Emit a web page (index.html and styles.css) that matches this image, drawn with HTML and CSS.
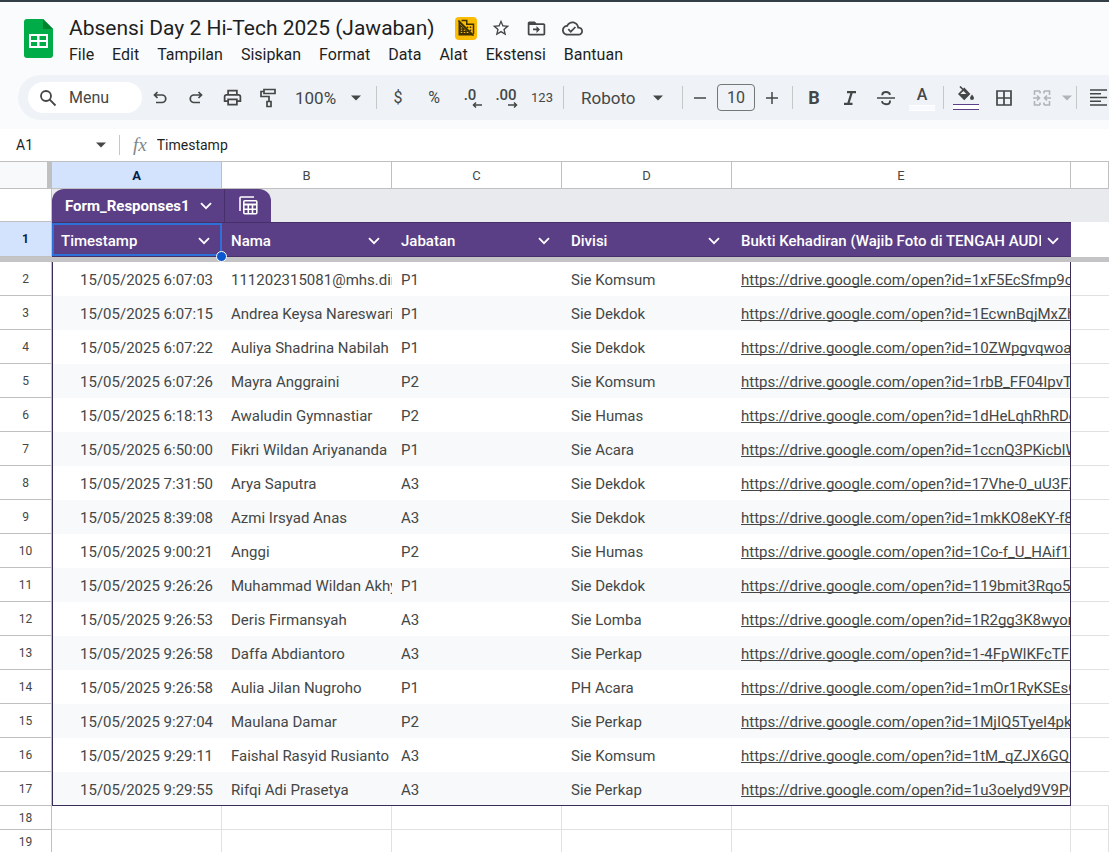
FILE: index.html
```html
<!DOCTYPE html>
<html lang="id">
<head>
    <meta charset="UTF-8">
    <meta name="viewport" content="width=device-width, initial-scale=1.0">
    <title>Absensi Day 2 Hi-Tech 2025 (Jawaban)</title>
    <link rel="stylesheet" href="styles.css">
</head>
<body>
    <!-- Shared icons -->
    <svg class="icon-defs" aria-hidden="true">
        <symbol id="caret" viewBox="0 0 10 6"><path d="M0 0.5h10L5 5.5z" fill="currentColor"/></symbol>
        <symbol id="chevron" viewBox="0 0 12 8"><path d="M1 1.2l5 5 5-5" fill="none" stroke="currentColor" stroke-width="1.8"/></symbol>
    </svg>

    <!-- Title and Menu -->
    <header class="app-header">
        <svg class="logo" viewBox="0 0 29 39" role="img" aria-label="Spreadsheet">
            <path d="M3 0h16l10 10v26a3 3 0 0 1-3 3H3a3 3 0 0 1-3-3V3a3 3 0 0 1 3-3z" fill="#00ac47"/>
            <path d="M19 0l10 10H19z" fill="#00832d"/>
            <path d="M5 15h19v14H5zM7 17v4h6v-4zM15.500 17v4H22v-4zM7 23v4h6v-4zM15.500 23v4H22v-4z" fill="#fff" fill-rule="evenodd"/>
        </svg>
        <div class="header-text">
            <div class="title-row">
                <h1 class="doc-title">Absensi Day 2 Hi-Tech 2025 (Jawaban)</h1>
                <div class="title-icons">
                    <button class="badge-button" aria-label="Eksternal">
                        <svg viewBox="0 0 24 24" width="18" height="18">
                            <path d="M3 4v17h17zM6 2h7v5h9v13" fill="none" stroke="#3c2f00" stroke-width="2"/>
                            <path d="M3 6v15h16z" fill="#3c2f00"/>
                            <path d="M5 12h2M5 15h2M5 18h2M9 15h2M9 18h2M13 18h2" stroke="#fbbc04" stroke-width="1.500"/>
                            <path d="M2 2l20 20M13 11h2M17 11h2M17 15h2" stroke="#3c2f00" stroke-width="2"/>
                        </svg>
                    </button>
                    <button class="icon-button" aria-label="Beri bintang">
                        <svg viewBox="0 0 24 24" width="20" height="20" fill="currentColor"><path d="M22 9.240l-7.190-.62L12 2 9.190 8.630 2 9.240l5.460 4.730L5.820 21 12 17.270 18.180 21l-1.630-7.030L22 9.240zM12 15.400l-3.760 2.270 1-4.280-3.320-2.880 4.380-.38L12 6.100l1.710 4.040 4.380.38-3.320 2.880 1 4.280L12 15.400z"/></svg>
                    </button>
                    <button class="icon-button" aria-label="Pindahkan">
                        <svg viewBox="0 0 24 24" width="21" height="21" fill="currentColor"><path d="M20 6h-8l-2-2H4c-1.100 0-2 .9-2 2v12c0 1.100.9 2 2 2h16c1.100 0 2-.9 2-2V8c0-1.100-.9-2-2-2zm0 12H4V8h16v10zm-8-1l4-4-4-4v3H8v2h4v3z"/></svg>
                    </button>
                    <button class="icon-button" aria-label="Status dokumen">
                        <svg viewBox="0 0 24 24" width="21" height="21" fill="currentColor"><path d="M19.350 10.040C18.670 6.590 15.640 4 12 4 9.110 4 6.600 5.640 5.350 8.040 2.340 8.360 0 10.910 0 14c0 3.310 2.690 6 6 6h13c2.760 0 5-2.240 5-5 0-2.640-2.050-4.780-4.650-4.960zM19 18H6c-2.210 0-4-1.790-4-4s1.790-4 4-4h.71C7.370 7.690 9.480 6 12 6c3.040 0 5.500 2.460 5.500 5.500v.5H19c1.660 0 3 1.340 3 3s-1.340 3-3 3zm-9-3.820l-2.090-2.090L6.500 13.500 10 17l6.010-6.010-1.410-1.410z"/></svg>
                    </button>
                </div>
            </div>
            <nav class="menu-bar">
                <button>File</button>
                <button>Edit</button>
                <button>Tampilan</button>
                <button>Sisipkan</button>
                <button>Format</button>
                <button>Data</button>
                <button>Alat</button>
                <button>Ekstensi</button>
                <button>Bantuan</button>
            </nav>
        </div>
    </header>

    <!-- Toolbar -->
    <div class="toolbar" role="toolbar">
        <button class="menu-search">
            <svg viewBox="0 0 18 18" width="18" height="18" fill="none" stroke="currentColor" stroke-width="1.800"><circle cx="7" cy="7" r="5"/><path d="M10.700 10.700L16.500 16.500"/></svg>
            Menu
        </button>
        <button class="tool" aria-label="Urungkan">
            <svg viewBox="0 0 16 16" width="16" height="16" fill="none" stroke="currentColor" stroke-width="1.700"><path d="M5.500 2L2.500 5l3 3M2.500 5H10a3.700 3.700 0 0 1 0 7.500H4"/></svg>
        </button>
        <button class="tool" aria-label="Ulangi">
            <svg viewBox="0 0 16 16" width="16" height="16" fill="none" stroke="currentColor" stroke-width="1.700"><path d="M10.500 2l3 3-3 3M13.500 5H6a3.700 3.700 0 0 0 0 7.500h6"/></svg>
        </button>
        <button class="tool" aria-label="Cetak">
            <svg viewBox="0 0 24 24" width="21" height="21" fill="currentColor"><path d="M19 8h-1V3H6v5H5c-1.660 0-3 1.340-3 3v6h4v4h12v-4h4v-6c0-1.660-1.340-3-3-3zM8 5h8v3H8V5zm8 12v2H8v-4h8v2zm2-2v-2H6v2H4v-4c0-.55.45-1 1-1h14c.55 0 1 .45 1 1v4h-2z"/></svg>
        </button>
        <button class="tool" aria-label="Cat format">
            <svg viewBox="0 0 18 20" width="18" height="20" fill="none" stroke="currentColor" stroke-width="1.700"><path d="M5 1.500h11v4H5zM5 3.500H2v5h8v5M8 13.500h4v5H8z"/></svg>
        </button>
        <span class="select zoom">
            <select aria-label="Zoom"><option>100%</option></select>
            <svg class="caret"><use href="#caret"/></svg>
        </span>
        <span class="separator"></span>
        <button class="tool tool-text" aria-label="Format mata uang">$</button>
        <button class="tool tool-text" aria-label="Format persen">%</button>
        <button class="tool decimals" aria-label="Kurangi desimal">
            .0
            <svg viewBox="0 0 10 6" width="10" height="6" fill="none" stroke="currentColor" stroke-width="1.500"><path d="M10 3H1.500M4 .5L1.500 3 4 5.500"/></svg>
        </button>
        <button class="tool decimals" aria-label="Tambah desimal">
            .00
            <svg viewBox="0 0 10 6" width="10" height="6" fill="none" stroke="currentColor" stroke-width="1.500"><path d="M0 3h8.500M6 .5L8.500 3 6 5.500"/></svg>
        </button>
        <button class="tool tool-number" aria-label="Format lainnya">123</button>
        <span class="separator"></span>
        <span class="select font">
            <select aria-label="Font"><option>Roboto</option></select>
            <svg class="caret"><use href="#caret"/></svg>
        </span>
        <span class="separator"></span>
        <div class="font-size">
            <button aria-label="Perkecil ukuran font"><svg viewBox="0 0 12 12" width="12" height="12" stroke="currentColor" stroke-width="1.500"><path d="M0 6h12"/></svg></button>
            <input type="text" value="10" aria-label="Ukuran font">
            <button aria-label="Perbesar ukuran font"><svg viewBox="0 0 12 12" width="12" height="12" stroke="currentColor" stroke-width="1.500"><path d="M0 6h12M6 0v12"/></svg></button>
        </div>
        <span class="separator"></span>
        <button class="tool tool-bold" aria-label="Tebal">B</button>
        <button class="tool" aria-label="Miring">
            <svg viewBox="0 0 14 14" width="14" height="14" fill="none" stroke="currentColor" stroke-width="2.200"><path d="M4 1.200h9M1 12.800h8.500M8.800 1.200L5.200 12.800"/></svg>
        </button>
        <button class="tool" aria-label="Coret">
            <svg viewBox="0 0 18 16" width="18" height="16" fill="none" stroke="currentColor" stroke-width="1.900"><path d="M0 8h18" stroke-width="1.500"/><path d="M13 4.800C12.400 1.200 5.800 1 5.300 4.500V5.200M5 11.200c.5 4 8 4 8 0v-.7"/></svg>
        </button>
        <button class="tool color-tool text-color" aria-label="Warna teks"><span>A</span></button>
        <span class="separator"></span>
        <button class="tool wide color-tool fill-color" aria-label="Warna isi">
            <svg viewBox="0 0 18 18" width="18" height="18"><path d="M3 1.500l7.500 7.300M7.300 3.800L2.200 9l5 5 5-5z" fill="none" stroke="currentColor" stroke-width="1.700"/><path d="M2 9h10.500l-5.200 5.500zM15 9.500c1 1.500 2 2.500 2 3.600a2 2 0 0 1-4 0c0-1.100 1-2.100 2-3.600z" fill="currentColor"/></svg>
        </button>
        <button class="tool wide" aria-label="Batas">
            <svg viewBox="0 0 16 16" width="16" height="16" fill="none" stroke="currentColor" stroke-width="1.700"><path d="M1 1h14v14H1zM8 1v14M1 8h14"/></svg>
        </button>
        <button class="tool wide" aria-label="Gabungkan sel" disabled>
            <svg viewBox="0 0 18 16" width="18" height="16" fill="none" stroke="currentColor" stroke-width="1.600"><path d="M7 1H1.500v4M11 1h5.500v4M7 15H1.500v-4M11 15h5.500v-4M7 1v2.500M11 1v2.500M7 15v-2.500M11 15v-2.500M0 8h6M4 5.500L6.500 8 4 10.500M18 8h-6M14 5.500L11.500 8l2.500 2.500"/></svg>
        </button>
        <button class="tool narrow" aria-label="Jenis penggabungan" disabled><svg class="caret"><use href="#caret"/></svg></button>
        <span class="separator"></span>
        <button class="tool" aria-label="Perataan horizontal">
            <svg viewBox="0 0 17 17" width="17" height="17" stroke="currentColor" stroke-width="1.600"><path d="M0 1h17M0 4.700h11M0 8.500h17M0 12.200h11M0 16h17"/></svg>
        </button>
    </div>

    <!-- Formula Bar -->
    <div class="formula-bar">
        <input class="name-box" type="text" value="A1" aria-label="Kotak nama">
        <button class="name-menu" aria-label="Rentang bernama"><svg class="caret"><use href="#caret"/></svg></button>
        <label class="fx" for="formula">fx</label>
        <input class="formula" id="formula" type="text" value="Timestamp">
    </div>

    <!-- Sheet -->
    <table class="sheet">
        <colgroup>
            <col class="col-number">
            <col class="col-data">
            <col class="col-data">
            <col class="col-data">
            <col class="col-data">
            <col class="col-link">
            <col>
        </colgroup>
        <thead>
            <tr class="letters">
                <td class="corner"></td>
                <th class="active">A</th>
                <th>B</th>
                <th>C</th>
                <th>D</th>
                <th>E</th>
                <th></th>
            </tr>
            <tr class="tab-row">
                <th></th>
                <td colspan="6">
                    <div class="table-tab">
                        <button class="tab-name">Form_Responses1 <svg class="chevron"><use href="#chevron"/></svg></button>
                        <button class="tab-view" aria-label="Tampilan tabel">
                            <svg viewBox="0 0 19 19" width="19" height="19" fill="none" stroke="currentColor" stroke-width="1.600"><path d="M1 15V2a1 1 0 0 1 1-1h13"/><rect x="4.800" y="4.800" width="13" height="13" rx="1"/><path d="M5 8.500h13" stroke-width="2.200"/><path d="M5 13.200h13M9.300 9v9M13.500 9v9"/></svg>
                        </button>
                    </div>
                </td>
            </tr>
            <tr class="field-row">
                <th class="active">1</th>
                <td class="selected"><div class="field">Timestamp<button aria-label="Menu kolom Timestamp"><svg class="chevron"><use href="#chevron"/></svg></button></div><span class="fill-handle"></span></td>
                <td><div class="field">Nama<button aria-label="Menu kolom Nama"><svg class="chevron"><use href="#chevron"/></svg></button></div></td>
                <td><div class="field">Jabatan<button aria-label="Menu kolom Jabatan"><svg class="chevron"><use href="#chevron"/></svg></button></div></td>
                <td><div class="field">Divisi<button aria-label="Menu kolom Divisi"><svg class="chevron"><use href="#chevron"/></svg></button></div></td>
                <td><div class="field"><span>Bukti Kehadiran (Wajib Foto di TENGAH AUDIT</span><button aria-label="Menu kolom Bukti Kehadiran"><svg class="chevron"><use href="#chevron"/></svg></button></div></td>
                <td class="outside"></td>
            </tr>
            <tr class="freeze-bar"><td colspan="7"></td></tr>
        </thead>
        <tbody class="records">
            <tr><th>2</th><td>15/05/2025 6:07:03</td><td>111202315081@mhs.dinus</td><td>P1</td><td>Sie Komsum</td><td><a href="#">https://drive.google.com/open?id=1xF5EcSfmp9cW</a></td><td></td></tr>
            <tr><th>3</th><td>15/05/2025 6:07:15</td><td>Andrea Keysa Nareswari</td><td>P1</td><td>Sie Dekdok</td><td><a href="#">https://drive.google.com/open?id=1EcwnBqjMxZh</a></td><td></td></tr>
            <tr><th>4</th><td>15/05/2025 6:07:22</td><td>Auliya Shadrina Nabilah</td><td>P1</td><td>Sie Dekdok</td><td><a href="#">https://drive.google.com/open?id=10ZWpgvqwoa</a></td><td></td></tr>
            <tr><th>5</th><td>15/05/2025 6:07:26</td><td>Mayra Anggraini</td><td>P2</td><td>Sie Komsum</td><td><a href="#">https://drive.google.com/open?id=1rbB_FF04IpvT</a></td><td></td></tr>
            <tr><th>6</th><td>15/05/2025 6:18:13</td><td>Awaludin Gymnastiar</td><td>P2</td><td>Sie Humas</td><td><a href="#">https://drive.google.com/open?id=1dHeLqhRhRDo</a></td><td></td></tr>
            <tr><th>7</th><td>15/05/2025 6:50:00</td><td>Fikri Wildan Ariyananda</td><td>P1</td><td>Sie Acara</td><td><a href="#">https://drive.google.com/open?id=1ccnQ3PKicblW</a></td><td></td></tr>
            <tr><th>8</th><td>15/05/2025 7:31:50</td><td>Arya Saputra</td><td>A3</td><td>Sie Dekdok</td><td><a href="#">https://drive.google.com/open?id=17Vhe-0_uU3FZ</a></td><td></td></tr>
            <tr><th>9</th><td>15/05/2025 8:39:08</td><td>Azmi Irsyad Anas</td><td>A3</td><td>Sie Dekdok</td><td><a href="#">https://drive.google.com/open?id=1mkKO8eKY-f8</a></td><td></td></tr>
            <tr><th>10</th><td>15/05/2025 9:00:21</td><td>Anggi</td><td>P2</td><td>Sie Humas</td><td><a href="#">https://drive.google.com/open?id=1Co-f_U_HAif1T</a></td><td></td></tr>
            <tr><th>11</th><td>15/05/2025 9:26:26</td><td>Muhammad Wildan Akhyar</td><td>P1</td><td>Sie Dekdok</td><td><a href="#">https://drive.google.com/open?id=119bmit3Rqo5T</a></td><td></td></tr>
            <tr><th>12</th><td>15/05/2025 9:26:53</td><td>Deris Firmansyah</td><td>A3</td><td>Sie Lomba</td><td><a href="#">https://drive.google.com/open?id=1R2gg3K8wyon</a></td><td></td></tr>
            <tr><th>13</th><td>15/05/2025 9:26:58</td><td>Daffa Abdiantoro</td><td>A3</td><td>Sie Perkap</td><td><a href="#">https://drive.google.com/open?id=1-4FpWlKFcTFE</a></td><td></td></tr>
            <tr><th>14</th><td>15/05/2025 9:26:58</td><td>Aulia Jilan Nugroho</td><td>P1</td><td>PH Acara</td><td><a href="#">https://drive.google.com/open?id=1mOr1RyKSEsQ</a></td><td></td></tr>
            <tr><th>15</th><td>15/05/2025 9:27:04</td><td>Maulana Damar</td><td>P2</td><td>Sie Perkap</td><td><a href="#">https://drive.google.com/open?id=1MjIQ5TyeI4pk</a></td><td></td></tr>
            <tr><th>16</th><td>15/05/2025 9:29:11</td><td>Faishal Rasyid Rusianto</td><td>A3</td><td>Sie Komsum</td><td><a href="#">https://drive.google.com/open?id=1tM_qZJX6GQE</a></td><td></td></tr>
            <tr><th>17</th><td>15/05/2025 9:29:55</td><td>Rifqi Adi Prasetya</td><td>A3</td><td>Sie Perkap</td><td><a href="#">https://drive.google.com/open?id=1u3oelyd9V9PC</a></td><td></td></tr>
        </tbody>
        <tbody class="empty-rows">
            <tr><th>18</th><td></td><td></td><td></td><td></td><td></td><td></td></tr>
            <tr><th>19</th><td></td><td></td><td></td><td></td><td></td><td></td></tr>
        </tbody>
    </table>
</body>
</html>
```

FILE: styles.css
```css
/* General Reset and Basic Styles */
* {
    margin: 0;
    padding: 0;
    box-sizing: border-box;
}

body {
    font-family: Roboto, Arial, sans-serif;
    font-size: 15px;
    color: #444746;
    background-color: #f9fbfd;
    border-top: 2px solid #343e46;
    min-height: 100vh;
    overflow: hidden;
}

button,
input,
select {
    font: inherit;
    color: inherit;
    border: none;
    background: none;
    outline: none;
}

button {
    cursor: pointer;
}

svg {
    display: block;
    flex-shrink: 0;
}

.icon-defs {
    display: none;
}

.caret {
    width: 10px;
    height: 6px;
}

.chevron {
    width: 12px;
    height: 8px;
}

/* Title and Menu */
.app-header {
    display: flex;
    padding: 12px 24px 0;
    height: 73px;
}

.logo {
    width: 29px;
    height: 39px;
    margin-top: 5px;
}

.header-text {
    margin-left: 16px;
}

.title-row {
    display: flex;
    align-items: center;
    height: 28px;
}

.doc-title {
    font-size: 21px;
    font-weight: normal;
    color: #1f1f1f;
    white-space: nowrap;
}

.title-icons {
    display: flex;
    align-items: center;
    gap: 12px;
    margin-left: 20px;
}

.badge-button {
    display: flex;
    align-items: center;
    justify-content: center;
    width: 22px;
    height: 23px;
    border-radius: 4px;
    background-color: #fbbc04;
}

.icon-button {
    display: flex;
    align-items: center;
    justify-content: center;
    width: 24px;
    height: 24px;
}

.menu-bar {
    display: flex;
    gap: 18px;
    height: 24px;
    color: #1f1f1f;
    font-size: 16px;
}

/* Toolbar */
.toolbar {
    display: flex;
    align-items: center;
    height: 45px;
    margin-left: 18px;
    padding-left: 10px;
    border-radius: 23px 0 0 23px;
    background-color: #eff2f7;
    white-space: nowrap;
}

.menu-search {
    display: flex;
    align-items: center;
    gap: 12px;
    flex-shrink: 0;
    width: 114px;
    height: 31px;
    padding-left: 11px;
    border-radius: 16px;
    background-color: #fff;
    font-size: 16px;
}

.tool {
    display: flex;
    align-items: center;
    justify-content: center;
    flex-shrink: 0;
    width: 36px;
    height: 32px;
}

.tool.wide {
    width: 38px;
}

.tool.narrow {
    width: 12px;
}

.tool:disabled {
    color: #b1b4b8;
}

.tool-text {
    font-size: 16px;
}

.tool-number {
    font-size: 13px;
}

.tool-bold {
    font-size: 18px;
    font-weight: bold;
}

.decimals {
    flex-direction: column;
    align-items: center;
    font-weight: 500;
    line-height: 14px;
}

.decimals svg {
    align-self: flex-end;
    margin-right: 6px;
}

.separator {
    flex-shrink: 0;
    width: 1px;
    height: 23px;
    margin: 0 3px;
    background-color: #c7c7c7;
}

.select {
    display: grid;
    align-items: center;
    flex-shrink: 0;
    font-size: 17px;
}

.select select,
.select .caret {
    grid-area: 1 / 1;
}

.select select {
    appearance: none;
    width: 100%;
    height: 32px;
}

.select .caret {
    justify-self: end;
    margin-right: 16px;
    pointer-events: none;
}

.zoom {
    width: 87px;
    padding-left: 9px;
}

.font {
    width: 112px;
    padding-left: 14px;
}

.zoom .caret {
    margin-right: 12px;
}

.font-size {
    display: flex;
    align-items: center;
    flex-shrink: 0;
    gap: 3px;
    padding-right: 3px;
}

.font-size button {
    display: flex;
    align-items: center;
    justify-content: center;
    width: 28px;
    height: 28px;
}

.font-size input {
    width: 38px;
    height: 27px;
    border: 1px solid #747775;
    border-radius: 4px;
    font-size: 16px;
    text-align: center;
}

.color-tool {
    flex-direction: column;
    gap: 1px;
}

.color-tool::after {
    content: "";
    width: 26px;
    height: 4px;
    border-top: 1px solid;
    border-bottom: 1px solid;
}

.text-color {
    font-size: 16px;
    font-weight: 500;
}

.text-color::after {
    border-color: #fff;
    background-color: #f8fafd;
}

.fill-color::after {
    border-color: #5b3f86;
    background-color: #fff;
}

/* Formula Bar */
.formula-bar {
    display: flex;
    align-items: center;
    height: 32px;
    margin-top: 9px;
    padding-left: 16px;
    background-color: #fff;
    color: #1f1f1f;
    font-size: 14px;
}

.name-box {
    width: 80px;
}

.name-menu {
    color: #444746;
}

.fx {
    margin-left: 13px;
    padding-left: 13px;
    border-left: 1px solid #c7c7c7;
    color: #80868b;
    font-family: "Liberation Serif", serif;
    font-size: 19px;
    font-style: italic;
    line-height: 20px;
}

.formula {
    flex-grow: 1;
    margin-left: 10px;
}

/* Sheet */
.sheet {
    width: 100%;
    table-layout: fixed;
    border-collapse: separate;
    border-spacing: 0;
    background-color: #fff;
}

.col-number {
    width: 52px;
}

.col-data {
    width: 170px;
}

.col-link {
    width: 339px;
}

.sheet th {
    border-right: 1px solid #c0c0c0;
    border-bottom: 1px solid #c0c0c0;
    font-size: 12px;
    font-weight: normal;
}

.sheet .active {
    background-color: #d3e3fd;
    color: #041e49;
    font-weight: bold;
}

.letters th,
.letters td {
    height: 28px;
    border-top: 1px solid #c0c0c0;
    border-bottom: 1px solid #c0c0c0;
}

.letters .corner {
    border-right: 5px solid #c0c0c0;
    background-color: #f8f9fa;
}

.letters th {
    font-size: 13px;
}

/* Table Tab */
.tab-row td {
    height: 33px;
    background-color: #e8eaed;
}

.table-tab {
    display: flex;
    width: 219px;
    height: 33px;
    border-radius: 12px 12px 0 0;
    background-color: #5b3f86;
    color: #fff;
    overflow: hidden;
}

.tab-name {
    display: flex;
    align-items: center;
    justify-content: space-between;
    width: 173px;
    padding: 0 12px 0 13px;
    border-right: 1px solid #46306a;
    font-weight: bold;
}

.tab-view {
    display: flex;
    align-items: center;
    justify-content: center;
    flex-grow: 1;
}

/* Field Names */
.field-row td {
    height: 35px;
    border-top: 1px solid #46306a;
    border-bottom: 1px solid #46306a;
    background-color: #5b3f86;
    color: #fff;
    font-weight: 500;
}

.field {
    display: flex;
    align-items: center;
    justify-content: space-between;
    padding: 2px 12px 0 9px;
    white-space: nowrap;
}

.field span {
    width: 300px;
    overflow: hidden;
}

.field-row .selected {
    position: relative;
    box-shadow: inset 0 0 0 2px #2f6fd8;
}

.fill-handle {
    position: absolute;
    right: -5px;
    bottom: -6px;
    width: 11px;
    height: 11px;
    border: 1px solid #fff;
    border-radius: 50%;
    background-color: #0b57d0;
}

.sheet .outside {
    background-color: #fff;
    border: none;
}

.freeze-bar td {
    height: 5px;
    background-color: #c4c4c6;
}

/* Records */
.records th {
    height: 34px;
}

.records td {
    padding: 2px 0 0 9px;
    white-space: nowrap;
    overflow: hidden;
}

.records tr:nth-child(even) td {
    background-color: #f8f9fb;
}

.records td:nth-child(2) {
    padding-right: 9px;
    border-left: 1px solid #3a2d55;
    text-align: right;
}

.records td:nth-child(6) {
    border-right: 1px solid #3a2d55;
}

.records tr:last-child td {
    border-bottom: 1px solid #3a2d55;
}

.records tr td:last-child {
    border-bottom: 1px solid #e1e1e1;
    background-color: #fff;
}

.records a {
    color: inherit;
    text-decoration-skip-ink: none;
}

/* Empty Rows */
.empty-rows th {
    height: 24px;
}

.empty-rows td {
    border-right: 1px solid #e1e1e1;
    border-bottom: 1px solid #e1e1e1;
}
```
